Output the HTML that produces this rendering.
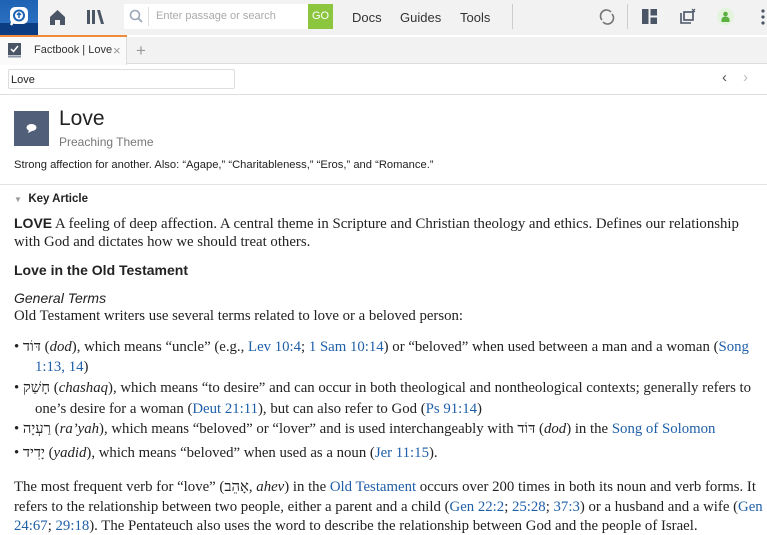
<!DOCTYPE html>
<html><head><meta charset="utf-8"><style>
*{margin:0;padding:0;box-sizing:border-box}
body{width:767px;height:532px;overflow:hidden;background:#fff;font-family:"Liberation Sans",sans-serif;position:relative}
.a{position:absolute;white-space:nowrap}
.s{font-family:"Liberation Serif","Noto Serif CJK SC",serif;font-size:14.8px;color:#222}
a{color:#1f5fa8;text-decoration:none}
.h{font-family:"Liberation Serif","DejaVu Serif",serif}
</style></head><body>
<div class="a" style="left:0;top:0;width:767px;height:35px;background:#f2f2f2"></div>
<div class="a" style="left:0;top:0;width:38px;height:35px;background:linear-gradient(#1e63b3 0,#2a6fc0 23px,#0c3c82 23px)"></div>
<svg class="a" style="left:8px;top:6px" width="22" height="22" viewBox="0 0 22 22"><rect x="2" y="1" width="18" height="17" rx="5" fill="#fff"/><circle cx="11" cy="9.5" r="5" fill="none" stroke="#1e63b3" stroke-width="2"/><path d="M11 7v5M9 9l2-2 2 2" stroke="#1e63b3" stroke-width="1.5" fill="none"/><path d="M6 14l-3 5" stroke="#fff" stroke-width="2.5"/></svg>
<div class="a" style="left:0;top:35px;width:127px;height:2px;background:#f08a3c"></div>
<svg class="a" style="left:49px;top:9px" width="17" height="16"><path d="M1 8L8.5 1 16 8V16H11V11H6V16H1Z" fill="#4a5566"/></svg>
<svg class="a" style="left:87px;top:10px" width="17" height="14"><rect x="0" y="0" width="3" height="14" fill="#4a5566"/><rect x="5" y="0" width="3" height="14" fill="#4a5566"/><path d="M10 0l3 0 4 14-3 0z" fill="#4a5566"/></svg>
<div class="a" style="left:124px;top:4px;width:184px;height:25px;background:#fff"></div>
<svg class="a" style="left:129px;top:9px" width="14" height="14"><circle cx="6" cy="6" r="4.5" fill="none" stroke="#9aa6b8" stroke-width="1.6"/><path d="M9 9l4 4" stroke="#9aa6b8" stroke-width="1.8"/></svg>
<div class="a" style="left:148px;top:7px;width:1px;height:19px;background:#ddd"></div>
<div class="a" style="left:156px;top:10px;font-size:11px;color:#aaa">Enter passage or search</div>
<div class="a" style="left:308px;top:4px;width:25px;height:25px;background:#8cc63f;color:#fff;font-size:11px;text-align:center;line-height:25px">GO</div>
<div class="a" style="left:352px;top:10px;font-size:13px;color:#333">Docs</div>
<div class="a" style="left:400px;top:10px;font-size:13px;color:#333">Guides</div>
<div class="a" style="left:460px;top:10px;font-size:13px;color:#333">Tools</div>
<div class="a" style="left:512px;top:4px;width:1px;height:25px;background:#ccc"></div>
<svg class="a" style="left:598px;top:8px" width="18" height="18"><path d="M4 12A6 6 0 0 1 13 4M14 6A6 6 0 0 1 5 14" stroke="#777" stroke-width="1.6" fill="none"/></svg>
<div class="a" style="left:627px;top:4px;width:1px;height:25px;background:#ccc"></div>
<svg class="a" style="left:642px;top:9px" width="15" height="15"><rect x="0" y="0" width="6.5" height="15" fill="#4a5566"/><rect x="8.5" y="0" width="6.5" height="6.5" fill="#4a5566"/><rect x="8.5" y="8.5" width="6.5" height="6.5" fill="#4a5566"/></svg>
<svg class="a" style="left:679px;top:7px" width="18" height="18"><path d="M2 6v10h10" stroke="#4a5566" stroke-width="1.6" fill="none"/><rect x="5" y="5" width="9" height="8" fill="none" stroke="#4a5566" stroke-width="1.6"/><path d="M13 2l3 3M16 2l-3 3" stroke="#4a5566" stroke-width="1.2"/></svg>
<div class="a" style="left:717px;top:8px;width:17px;height:17px;border-radius:50%;background:#e3f3dc"></div>
<svg class="a" style="left:721px;top:11px" width="9" height="11"><circle cx="4.5" cy="3" r="2.3" fill="#5bb040"/><path d="M0.5 11V8.5a4 3 0 0 1 8 0V11z" fill="#5bb040"/></svg>
<svg class="a" style="left:761px;top:9px" width="4" height="16"><circle cx="2" cy="2" r="1.6" fill="#4a5566"/><circle cx="2" cy="8" r="1.6" fill="#4a5566"/><circle cx="2" cy="14" r="1.6" fill="#4a5566"/></svg>
<div class="a" style="left:0;top:37px;width:767px;height:27px;background:#f2f2f2;border-bottom:1px solid #ddd"></div>
<div class="a" style="left:0;top:37px;width:127px;height:28px;background:#fafafa;border-right:1px solid #ddd"></div>
<svg class="a" style="left:8px;top:43px" width="14" height="15"><rect x="0" y="0" width="13" height="12" fill="#4a5566"/><rect x="0" y="12.5" width="13" height="2" fill="#8a93a3"/><path d="M3 6l2.5 2.5L10 3" stroke="#fff" stroke-width="1.5" fill="none"/></svg>
<div class="a" style="left:34px;top:44px;font-size:11px;color:#333">Factbook | Love</div>
<div class="a" style="left:113px;top:43px;font-size:13px;color:#999">×</div>
<div class="a" style="left:136px;top:41px;font-size:17px;color:#999">+</div>
<div class="a" style="left:0;top:65px;width:767px;height:30px;background:#fff;border-bottom:1px solid #ddd"></div>
<div class="a" style="left:8px;top:69px;width:227px;height:20px;border:1px solid #ddd;border-radius:2px;font-size:11px;padding:4px 2px;color:#222">Love</div>
<div class="a" style="left:722px;top:69px;font-size:15px;color:#555">‹</div>
<div class="a" style="left:743px;top:69px;font-size:15px;color:#bbb">›</div>
<div class="a" style="left:14px;top:111px;width:35px;height:35px;background:#525f78"></div>
<svg class="a" style="left:25px;top:123px" width="13" height="10"><ellipse cx="6.5" cy="4.5" rx="5" ry="3.5" fill="#fff"/><path d="M4 7l-1 3 4-2z" fill="#fff"/></svg>
<div class="a" style="left:59px;top:107px;font-size:21px;color:#222">Love</div>
<div class="a" style="left:59px;top:135px;font-size:12px;color:#777">Preaching Theme</div>
<div class="a" style="left:14px;top:159px;font-size:11.2px;color:#222">Strong affection for another. Also: “Agape,” “Charitableness,” “Eros,” and “Romance.”</div>
<div class="a" style="left:0;top:184px;width:767px;height:1px;background:#e2e2e2"></div>
<div class="a" style="left:14px;top:193px;font-size:11.5px;color:#222"><span style="color:#999;font-size:8px">▼</span>&nbsp;&nbsp;<b>Key Article</b></div>
<div class="a s" style="left:14px;top:215px"><b style="font-family:'Liberation Sans';font-size:14px">LOVE</b> A feeling of deep affection. A central theme in Scripture and Christian theology and ethics. Defines our relationship</div>
<div class="a s" style="left:14px;top:234px">with God and dictates how we should treat others.</div>
<div class="a" style="left:14px;top:262px;font-size:14px;font-weight:bold;color:#222">Love in the Old Testament</div>
<div class="a" style="left:14px;top:290px;font-size:14px;font-style:italic;color:#222">General Terms</div>
<div class="a s" style="left:14px;top:308px">Old Testament writers use several terms related to love or a beloved person:</div>
<div class="a s" style="left:14px;top:339px">• <span class="h">דּוֹד</span> (<i>dod</i>), which means “uncle” (e.g., <a>Lev 10:4</a>; <a>1 Sam 10:14</a>) or “beloved” when used between a man and a woman (<a>Song</a></div>
<div class="a s" style="left:35px;top:359px"><a>1:13, 14</a>)</div>
<div class="a s" style="left:14px;top:380px">• <span class="h">חָשַׁק</span> (<i>chashaq</i>), which means “to desire” and can occur in both theological and nontheological contexts; generally refers to</div>
<div class="a s" style="left:35px;top:401px">one’s desire for a woman (<a>Deut 21:11</a>), but can also refer to God (<a>Ps 91:14</a>)</div>
<div class="a s" style="left:14px;top:421px">• <span class="h">רַעְיָה</span> (<i>ra’yah</i>), which means “beloved” or “lover” and is used interchangeably with <span class="h">דּוֹד</span> (<i>dod</i>) in the <a>Song of Solomon</a></div>
<div class="a s" style="left:14px;top:445px">• <span class="h">יָדִיד</span> (<i>yadid</i>), which means “beloved” when used as a noun (<a>Jer 11:15</a>).</div>
<div class="a s" style="left:14px;top:479px">The most frequent verb for “love” (<span class="h">אָהֵב</span>, <i>ahev</i>) in the <a>Old Testament</a> occurs over 200 times in both its noun and verb forms. It</div>
<div class="a s" style="left:14px;top:499px">refers to the relationship between two people, either a parent and a child (<a>Gen 22:2</a>; <a>25:28</a>; <a>37:3</a>) or a husband and a wife (<a>Gen</a></div>
<div class="a s" style="left:14px;top:518px"><a>24:67</a>; <a>29:18</a>). The Pentateuch also uses the word to describe the relationship between God and the people of Israel.</div>
</body></html>
